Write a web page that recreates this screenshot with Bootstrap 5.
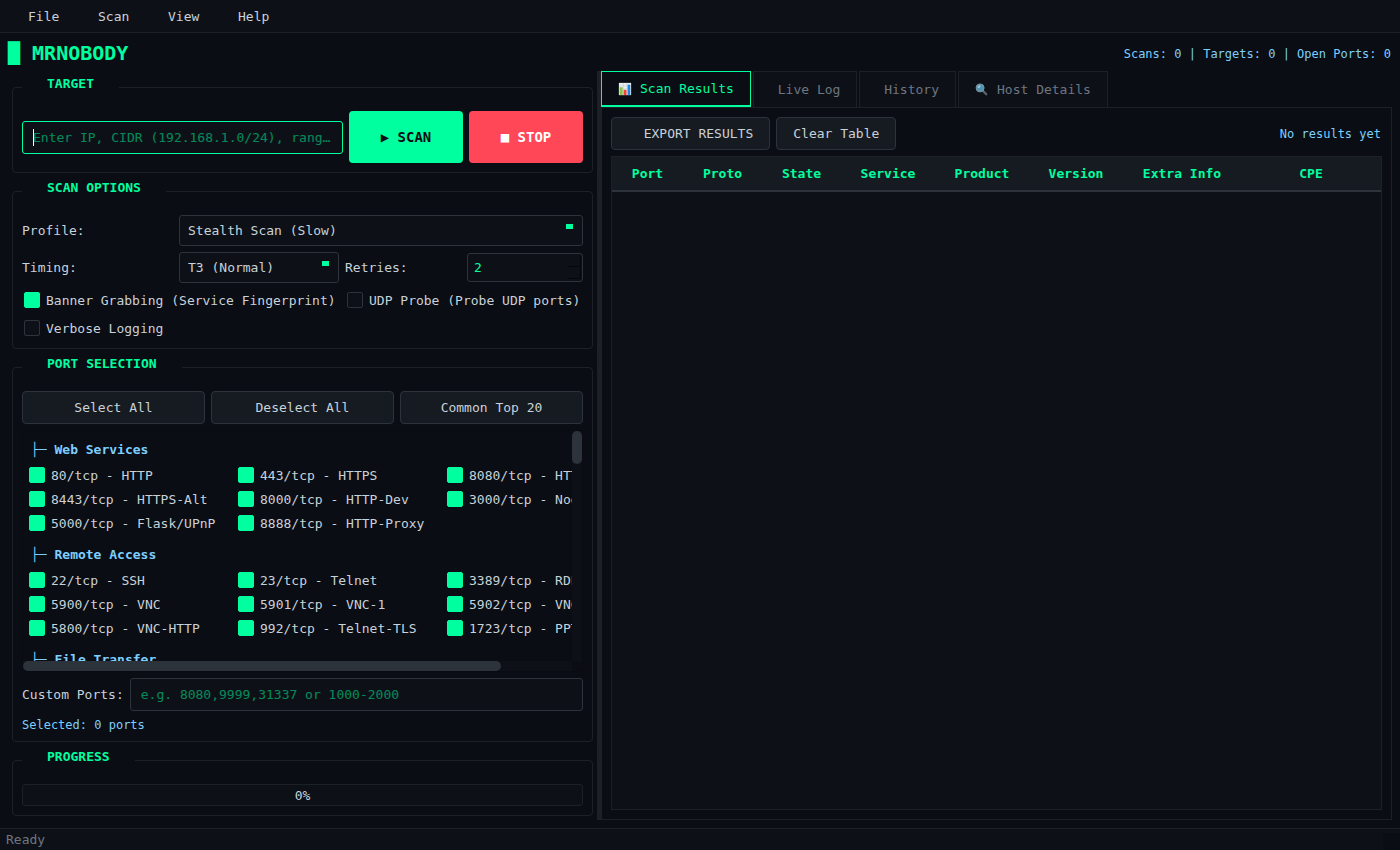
<!DOCTYPE html>
<html lang="en" data-bs-theme="dark">
<head>
<meta charset="utf-8">
<meta name="viewport" content="width=device-width, initial-scale=1">
<title>MRNOBODY</title>
<link href="https://cdn.jsdelivr.net/npm/bootstrap@5.3.0/dist/css/bootstrap.min.css" rel="stylesheet">
<style>
:root{--base:#0a0d14;--panel:#0d1117;--raised:#161b22;--line:#1c2128;--edge:#2d333b;--ink:#c9d1d9;--dim:#6e7681;--green:#00ff9f;--red:#ff4757;--sky:#7dcfff}
body{background:var(--base);color:var(--ink);font:13px/15px "DejaVu Sans Mono","Liberation Mono",monospace}
button,input,select{font:inherit;color:inherit}
.menu-bar{background:var(--panel);border-bottom:1px solid var(--line);height:33px;padding-left:9px}
.menu-bar button{width:70px;background:none;border:0;text-align:left;padding:0 19px}
.app-head{padding:8px 8px 6px}
.brand-name{font-size:20px;line-height:24px;font-weight:700;color:var(--green)}
.info-text{font-size:12px;line-height:13px;padding:2px 1px 0 0;color:var(--sky)}
.work-area{padding:0 8px 8px;min-height:0}
.side-pane{flex:581 1 0;min-width:0;padding:5px 4px 4px;gap:7px}
.splitter{flex:0 0 4px;background:var(--line)}
.result-pane{flex:791 1 0;min-width:0}
.group-box{border:1px solid var(--line);border-radius:4px;padding:12px 9px 9px;margin:0;min-width:0}
.group-box legend{float:none;width:auto;margin:0;padding:0 25px 8px;font-size:13px;line-height:15px;font-weight:700;color:var(--green)}
.gap-s{gap:6px}
.field{background:var(--panel);border:1px solid var(--edge);border-radius:3px;height:33px;padding:0 10px;min-width:0;color:var(--green);outline:0}
.field::placeholder{color:var(--green);opacity:.5}
.field:placeholder-shown{text-overflow:ellipsis}
.field-active{border-color:var(--green);width:100%}
.caret-bar{position:absolute;left:11px;top:8px;width:1px;height:17px;background:#fff}
.act{width:114px;height:52px;border:0;border-radius:4px;font-size:14px;font-weight:700;padding:0}
.act-scan{background:var(--green);color:var(--base)}
.act-stop{background:var(--red);color:#fff}
.tool{background:var(--raised);border:1px solid var(--edge);border-radius:4px;height:33px;padding:0 16px;white-space:pre}
.option-grid{display:grid;grid-template-columns:minmax(0,151fr) minmax(0,160fr) minmax(0,116fr) minmax(0,116fr);gap:6px;align-items:center}
.span-2{grid-column:span 2}
.span-3{grid-column:span 3}
.span-4{grid-column:span 4}
.combo{appearance:none;height:31px;width:100%;padding:0 8px;border:1px solid var(--edge);border-radius:3px;background:linear-gradient(var(--green),var(--green)) right 9px top 8px/7px 5px no-repeat var(--panel)}
.spin{height:29px;width:100%;padding:0 6px;appearance:textfield}
.spin::-webkit-inner-spin-button{appearance:none}
.steps{position:absolute;right:2px;top:3px;bottom:3px;width:13px;display:flex;flex-direction:column;gap:1px}
.steps span{flex:1;background:var(--panel);border:solid #05070b;border-width:0 1px 1px 0}
.tick{display:flex;align-items:center;gap:6px;height:22px;white-space:nowrap}
.option-grid .tick{padding-left:2px}
.tick input{appearance:none;flex:0 0 16px;height:16px;margin:0;border:1px solid var(--edge);border-radius:2px;background:var(--panel)}
.tick input:checked{background:var(--green);border-color:var(--green)}
.port-group{flex:1 1 auto;display:flex;flex-direction:column;gap:6px}
.port-list{flex:1 1 0;min-height:160px;display:grid;grid-template:minmax(0,1fr) 10px/minmax(0,1fr) 10px;border:1px solid #090b10}
.port-view{overflow:auto;scrollbar-width:none;padding-left:6px}
.port-view::-webkit-scrollbar{display:none}
.port-view h3{font-size:13px;line-height:15px;font-weight:700;color:var(--sky);margin:0;padding:11px 2px 7px}
.port-grid{display:grid;grid-template-columns:repeat(3,209px);row-gap:2px;width:627px;margin-bottom:2px}
.track{background:var(--panel)}
.thumb{background:var(--edge);border-radius:5px}
.thumb-y{height:33px}
.thumb-x{height:10px;width:87%}
.meter{height:22px;background:var(--panel);border:1px solid var(--line);border-radius:3px}
.tab-row{gap:2px;height:36px}
.tab-row button{height:36px;background:var(--panel);color:var(--dim);border:1px solid var(--line);border-bottom:0;padding:0 16px;white-space:pre;display:flex;align-items:center}
.tab-row button.active{background:var(--base);color:var(--green);border:1px solid var(--green);border-bottom-width:2px}
.tab-row svg{width:14px;height:14px;margin-right:8px}
.tab-body{border:1px solid var(--line);padding:9px;gap:6px}
.grid-wrap{background:var(--panel);border:1px solid var(--line)}
.grid-wrap table{width:100%;table-layout:fixed;border-collapse:separate;border-spacing:0}
.grid-wrap th{height:35px;padding:0;text-align:center;white-space:nowrap;color:var(--green);background:var(--raised);border-bottom:2px solid var(--edge)}
.status-line{background:var(--panel);border-top:1px solid var(--line);height:22px;color:var(--dim);padding-left:6px}
.grip{width:17px;height:17px;background:var(--base)}
</style>
</head>
<body class="d-flex flex-column vh-100">
<nav class="menu-bar d-flex" aria-label="Menu">
  <button type="button">File</button><button type="button">Scan</button><button type="button">View</button><button type="button">Help</button>
</nav>
<header class="app-head d-flex justify-content-between align-items-center">
  <h1 class="brand-name m-0">█ MRNOBODY</h1>
  <div class="info-text">Scans: 0 | Targets: 0 | Open Ports: 0</div>
</header>
<main class="work-area d-flex flex-grow-1">
  <section class="side-pane d-flex flex-column">
    <fieldset class="group-box">
      <legend>TARGET</legend>
      <div class="d-flex align-items-center gap-s">
        <div class="position-relative flex-grow-1">
          <input class="field field-active d-block" type="text" aria-label="Target" placeholder="Enter IP, CIDR (192.168.1.0/24), range, or hostname">
          <span class="caret-bar"></span>
        </div>
        <button type="button" class="act act-scan">▶ SCAN</button>
        <button type="button" class="act act-stop">■ STOP</button>
      </div>
    </fieldset>
    <fieldset class="group-box">
      <legend>SCAN OPTIONS</legend>
      <div class="option-grid">
        <label for="profile">Profile:</label>
        <select id="profile" class="combo span-3"><option>Stealth Scan (Slow)</option></select>
        <label for="timing">Timing:</label>
        <select id="timing" class="combo"><option>T3 (Normal)</option></select>
        <label for="retries">Retries:</label>
        <div class="position-relative"><input id="retries" class="field spin d-block" type="number" value="2"><div class="steps"><span></span><span></span></div></div>
        <label class="tick span-2"><input type="checkbox" checked>Banner Grabbing (Service Fingerprint)</label>
        <label class="tick span-2"><input type="checkbox">UDP Probe (Probe UDP ports)</label>
        <label class="tick span-4"><input type="checkbox">Verbose Logging</label>
      </div>
    </fieldset>
    <fieldset class="group-box port-group">
      <legend>PORT SELECTION</legend>
      <div class="d-flex gap-s">
        <button type="button" class="tool flex-fill w-100">Select All</button>
        <button type="button" class="tool flex-fill w-100">Deselect All</button>
        <button type="button" class="tool flex-fill w-100">Common Top 20</button>
      </div>
      <div class="port-list">
        <div class="port-view">
          <h3>├─ Web Services</h3>
          <div class="port-grid">
            <label class="tick"><input type="checkbox" checked>80/tcp - HTTP</label>
            <label class="tick"><input type="checkbox" checked>443/tcp - HTTPS</label>
            <label class="tick"><input type="checkbox" checked>8080/tcp - HTTP-Alt</label>
            <label class="tick"><input type="checkbox" checked>8443/tcp - HTTPS-Alt</label>
            <label class="tick"><input type="checkbox" checked>8000/tcp - HTTP-Dev</label>
            <label class="tick"><input type="checkbox" checked>3000/tcp - Node.js</label>
            <label class="tick"><input type="checkbox" checked>5000/tcp - Flask/UPnP</label>
            <label class="tick"><input type="checkbox" checked>8888/tcp - HTTP-Proxy</label>
          </div>
          <h3>├─ Remote Access</h3>
          <div class="port-grid">
            <label class="tick"><input type="checkbox" checked>22/tcp - SSH</label>
            <label class="tick"><input type="checkbox" checked>23/tcp - Telnet</label>
            <label class="tick"><input type="checkbox" checked>3389/tcp - RDP</label>
            <label class="tick"><input type="checkbox" checked>5900/tcp - VNC</label>
            <label class="tick"><input type="checkbox" checked>5901/tcp - VNC-1</label>
            <label class="tick"><input type="checkbox" checked>5902/tcp - VNC-2</label>
            <label class="tick"><input type="checkbox" checked>5800/tcp - VNC-HTTP</label>
            <label class="tick"><input type="checkbox" checked>992/tcp - Telnet-TLS</label>
            <label class="tick"><input type="checkbox" checked>1723/tcp - PPTP</label>
          </div>
          <h3>├─ File Transfer</h3>
        </div>
        <div class="track"><div class="thumb thumb-y"></div></div>
        <div class="track"><div class="thumb thumb-x"></div></div>
      </div>
      <div class="d-flex align-items-center gap-s">
        <label for="custom" class="text-nowrap">Custom Ports:</label>
        <input id="custom" class="field flex-grow-1" type="text" placeholder="e.g. 8080,9999,31337 or 1000-2000">
      </div>
      <div class="info-text">Selected: 0 ports</div>
    </fieldset>
    <fieldset class="group-box">
      <legend>PROGRESS</legend>
      <div class="meter d-flex align-items-center justify-content-center" role="progressbar" aria-label="Scan progress" aria-valuenow="0" aria-valuemin="0" aria-valuemax="100">0%</div>
    </fieldset>
  </section>
  <div class="splitter"></div>
  <section class="result-pane d-flex flex-column">
    <div class="tab-row d-flex" role="tablist">
      <button type="button" role="tab" aria-selected="true" class="active"><svg viewBox="-1 -1 16 16" aria-hidden="true"><path fill="#eceff1" d="M0 0h14v14H0z"/><path stroke="#b8c4ca" stroke-width=".6" d="M0 3.500h14M0 7h14M0 10.500h14M5 0v14M9.300 0v14"/><path fill="#8bc34a" d="M1 5h3.300v9H1z"/><path fill="#f44336" d="M5.500 8h3.200v6H5.500z"/><path fill="#1e88e5" d="M10 2h3v12h-3z"/></svg>Scan Results</button>
      <button type="button" role="tab" aria-selected="false"> Live Log</button>
      <button type="button" role="tab" aria-selected="false"> History</button>
      <button type="button" role="tab" aria-selected="false"><svg viewBox="0 0 14 14" aria-hidden="true"><path stroke="#78868c" stroke-width="1.200" d="M7.800 7.500l2 2"/><path stroke="#5c6469" stroke-width="2.200" stroke-linecap="round" d="M9 9l2.300 2.300"/><circle cx="5.100" cy="4.900" r="4" fill="#4f94b5" stroke="#7d939d"/><ellipse cx="4.100" cy="3.600" rx="1.700" ry="1.100" transform="rotate(-35 4.100 3.600)" fill="#9cc9dc"/></svg>Host Details</button>
    </div>
    <div class="tab-body d-flex flex-column flex-grow-1">
      <div class="d-flex align-items-center gap-s">
        <button type="button" class="tool">  EXPORT RESULTS</button>
        <button type="button" class="tool">Clear Table</button>
        <span class="info-text ms-auto">No results yet</span>
      </div>
      <div class="grid-wrap flex-grow-1">
        <table>
          <colgroup><col width="71"><col width="79"><col width="79"><col width="94"><col width="94"><col width="94"><col width="118"><col></colgroup>
          <thead><tr><th>Port</th><th>Proto</th><th>State</th><th>Service</th><th>Product</th><th>Version</th><th>Extra Info</th><th>CPE</th></tr></thead>
          <tbody></tbody>
        </table>
      </div>
    </div>
  </section>
</main>
<footer class="status-line d-flex justify-content-between align-items-center"><span>Ready</span><span class="grip align-self-end"></span></footer>
<script src="https://cdn.jsdelivr.net/npm/bootstrap@5.3.0/dist/js/bootstrap.bundle.min.js"></script>
</body>
</html>
